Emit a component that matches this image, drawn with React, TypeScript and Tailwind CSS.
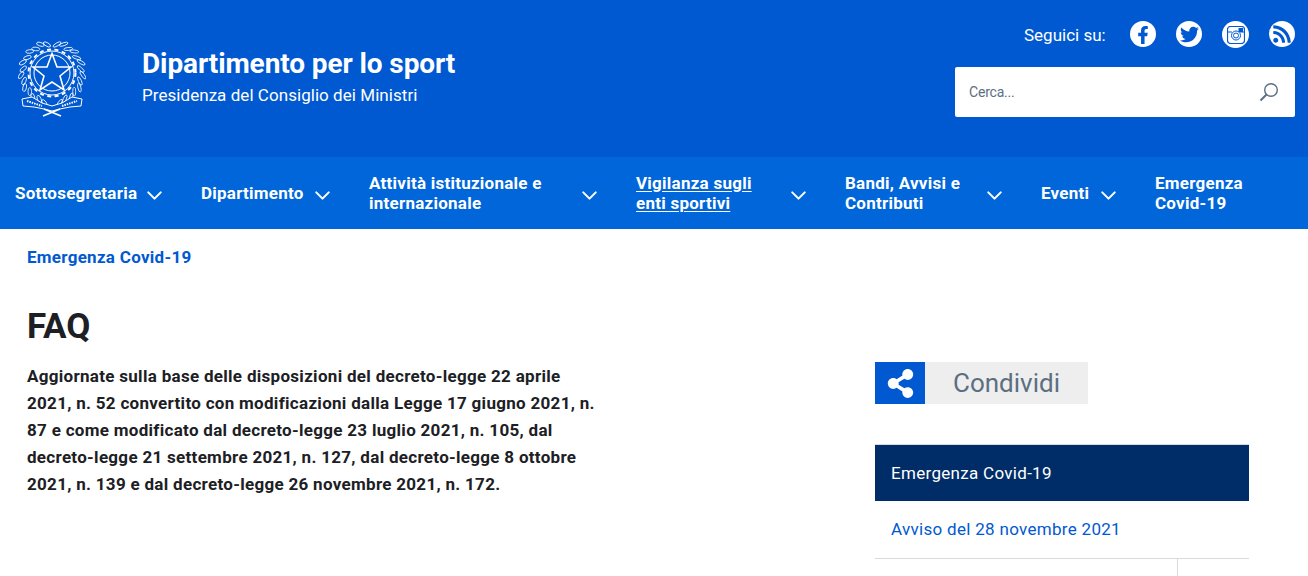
import { ChevronDown } from "lucide-react";
import { FaFacebookF, FaTwitter, FaRss, FaShareAlt } from "react-icons/fa";

const navItems = [
  { label: ["Sottosegretaria"], width: "w-[123px]", chevron: true },
  { label: ["Dipartimento"], width: "w-[105px]", chevron: true },
  { label: ["Attività istituzionale e", "internazionale"], width: "w-[204px]", chevron: true },
  { label: ["Vigilanza sugli", "enti sportivi"], width: "w-[146px]", chevron: true, underline: true },
  { label: ["Bandi, Avvisi e", "Contributi"], width: "w-[133px]", chevron: true },
  { label: ["Eventi"], width: "w-[51px]", chevron: true },
  { label: ["Emergenza", "Covid-19"], width: "w-[100px]", chevron: false },
];

// leaves of the wreath, placed along two arcs round the star
const leafAngles = [100, 112, 124, 136, 148, 160, 172, 184, 196, 208, 220, 232, 244, 256];

const Emblem = () => (
  <svg width="68" height="76" viewBox="0 0 68 76" fill="none" stroke="white" strokeWidth="0.8">
    {leafAngles.map((angle) => {
      const rad = (angle * Math.PI) / 180;
      const r = angle % 24 === 4 ? 29 : 31;
      return (
        <g key={angle}>
          <ellipse
            cx={34 + r * Math.cos(rad) * -1}
            cy={32 + r * Math.sin(rad) * -1 + 0}
            rx="4.500"
            ry="1.500"
            transform={`rotate(${angle + 50} ${34 - r * Math.cos(rad)} ${32 - r * Math.sin(rad)})`}
          />
          <ellipse
            cx={34 + r * Math.cos(rad)}
            cy={32 - r * Math.sin(rad)}
            rx="4"
            ry="1.800"
            transform={`rotate(${130 - angle} ${34 + r * Math.cos(rad)} ${32 - r * Math.sin(rad)})`}
          />
        </g>
      );
    })}
    {/* cog */}
    <circle cx="34" cy="32" r="22" fill="#0059d1" strokeWidth="1" />
    <circle cx="34" cy="32" r="23.500" strokeWidth="2" strokeDasharray="4 3.500" />
    <circle cx="34" cy="32" r="18" strokeWidth="1" />
    {/* star */}
    <path
      d="M34 12.500L39 26L53 26L42 35L46 49L34 41L22 49L26 35L15 26L29 26Z"
      fill="#0059d1"
      strokeWidth="1.600"
    />
    {/* ribbon */}
    <path
      d="M4 58L14 56L24 62L34 65L44 62L54 56L64 58L63 65L52 66L42 68L34 70L26 68L16 66L5 65Z"
      fill="#0059d1"
      strokeWidth="1"
    />
    <path d="M9 60L24 65M44 65L59 60" strokeWidth="2" strokeDasharray="1.500 1" />
    <path d="M25 75L42 68M43 75L26 68" strokeWidth="1.600" />
  </svg>
);

const InstagramIcon = () => (
  <svg width="18" height="18" viewBox="0 0 18 18" fill="none" stroke="#0059d1" strokeWidth="1">
    <rect x="0.500" y="0.500" width="17" height="17" rx="3" strokeWidth="1.200" />
    <path d="M1 6H5M13 6H17" />
    <rect x="12" y="2.500" width="3.500" height="3" fill="#0059d1" />
    <circle cx="9" cy="9.500" r="4.500" />
    <circle cx="9" cy="9.500" r="2.500" />
  </svg>
);

export default function App() {
  return (
    <div className="h-[576px] overflow-hidden bg-white font-['Roboto',sans-serif]">
      {/* Header */}
      <header className="flex h-[157px] justify-between bg-[#0059d1] pr-[13px] text-white">
        <div className="flex items-start pl-[18px] pt-[41px]">
          <Emblem />
          <div className="ml-[56px] pt-[5px]">
            <div className="text-[28px] font-bold leading-[36px] tracking-[-0.1px]">Dipartimento per lo sport</div>
            <div className="mt-[1px] text-[17px] leading-[24px] tracking-[0.05px]">Presidenza del Consiglio dei Ministri</div>
          </div>
        </div>
        <div className="w-[340px] pt-[21px]">
          <div className="flex h-[27px] items-center">
            <span className="ml-[69px] w-[106px] pt-[2px] text-[17px]">Seguici su:</span>
            <div className="flex gap-[20px]">
              <span className="flex size-[26px] items-center justify-center rounded-full bg-white text-[#0059d1]">
                <FaFacebookF size={18} className="mt-[2px]" />
              </span>
              <span className="flex size-[26px] items-center justify-center rounded-full bg-white text-[#0059d1]">
                <FaTwitter size={19} />
              </span>
              <span className="flex size-[27px] items-center justify-center rounded-full bg-white">
                <InstagramIcon />
              </span>
              <span className="flex size-[26px] items-center justify-center overflow-hidden rounded-full bg-white text-[#0059d1]">
                <FaRss size={20} />
              </span>
            </div>
          </div>
          <div className="mt-[19px] flex h-[50px] items-center justify-between rounded-[2px] bg-white pl-[14px] pr-[16px]">
            <span className="pt-[1px] text-[14px] tracking-[-0.2px] text-[#5c6f82]">Cerca...</span>
            <svg width="20" height="20" viewBox="0 0 20 20" fill="none" stroke="#5c6f82" strokeWidth="1.400">
              <circle cx="12" cy="8" r="6.300" />
              <path d="M7.500 12.500L1.500 18.500" strokeWidth="2" />
            </svg>
          </div>
        </div>
      </header>

      {/* Nav */}
      <nav className="flex h-[72px] items-center gap-[39px] bg-[#0066d9] pl-[15px] text-white">
        {navItems.map((item, index) => (
          <div key={index} className="flex items-center">
            <div
              className={`text-[17px] font-bold leading-[20px] tracking-[0.25px] ${item.width} ${
                item.underline ? "underline underline-offset-2" : ""
              }`}
            >
              {item.label.map((line) => (
                <div key={line} className="whitespace-nowrap">{line}</div>
              ))}
            </div>
            {item.chevron && <ChevronDown size={25} strokeWidth={2} className="ml-[4px] -mr-[5px] mt-[5px] shrink-0" />}
          </div>
        ))}
      </nav>

      {/* Content */}
      <main className="flex">
        <div className="w-[875px] pl-[27px]">
          <div className="pt-[17px] text-[17px] font-bold leading-[22px] tracking-[0.28px] text-[#0059d1]">Emergenza Covid-19</div>
          <h1 className="mt-[35px] text-[35px] font-bold leading-[48px] text-[#1c2024]">FAQ</h1>
          <p className="mt-[12px] text-[17px] font-bold leading-[27px] tracking-[0.3px] text-[#1c2024]">
            Aggiornate sulla base delle disposizioni del decreto-legge 22 aprile
            <br />
            2021, n. 52 convertito con modificazioni dalla Legge 17 giugno 2021, n.
            <br />
            87 e come modificato dal decreto-legge 23 luglio 2021, n. 105, dal
            <br />
            decreto-legge 21 settembre 2021, n. 127, dal decreto-legge 8 ottobre
            <br />
            2021, n. 139 e dal decreto-legge 26 novembre 2021, n. 172.
          </p>
        </div>
        <aside className="w-[374px] pt-[133px]">
          <div className="flex h-[42px] w-[213px] bg-[#eeeeee]">
            <span className="flex w-[50px] items-center justify-center bg-[#0059d1] text-white">
              <FaShareAlt size={29} />
            </span>
            <span className="ml-[28px] text-[26px] leading-[42px] text-[#5c6f82]">Condividi</span>
          </div>
          <div className="mt-[40px] border-t border-[#d9dadb]">
            <div className="flex h-[56px] items-center bg-[#002d68] pl-[16px] pt-[1px] text-[17px] tracking-[0.3px] text-white">Emergenza Covid-19</div>
            <div className="flex h-[58px] items-center border-b border-[#d9dadb] pl-[16px] text-[17px] tracking-[0.3px] text-[#0059d1]">
              Avviso del 28 novembre 2021
            </div>
            <div className="ml-[302px] h-[20px] border-l border-[#d9dadb]" />
          </div>
        </aside>
      </main>
    </div>
  );
}
